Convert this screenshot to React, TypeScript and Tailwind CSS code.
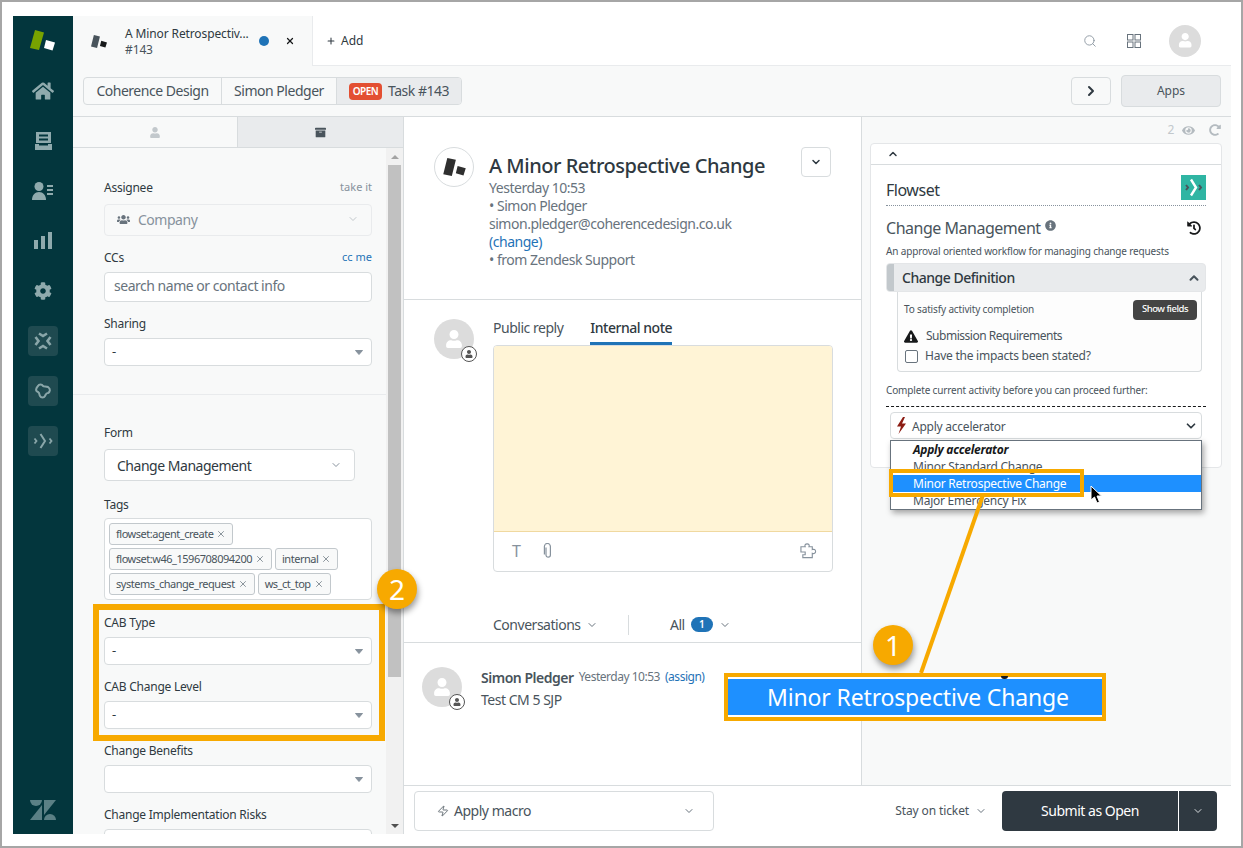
import { ChevronDown, ChevronUp, ChevronRight, Search, Plus, X, Zap } from "lucide-react";
import {
  FaHome,
  FaCog,
  FaUser,
  FaUsers,
  FaArchive,
  FaEye,
  FaRedoAlt,
  FaInfoCircle,
  FaHistory,
  FaExclamationTriangle,
} from "react-icons/fa";

// small triangle used by the native looking selects
function Caret() {
  return (
    <svg width="8" height="5" viewBox="0 0 8 5" className="shrink-0">
      <path d="M0.500 0.500 L7.500 0.500 L4 4.500 Z" fill="#87929d" stroke="#87929d" strokeLinejoin="round" />
    </svg>
  );
}

function Logo({ dark, light, className }: { dark: string; light: string; className?: string }) {
  return (
    <svg viewBox="0 0 25 20" className={className}>
      <polygon points="4.500,0 14,2 9.500,20 0,18" fill={dark} />
      <polygon points="16,9 25,11.500 22.500,19.500 14,17" fill={light} />
    </svg>
  );
}

function Avatar({ size }: { size: string }) {
  return (
    <div className={`${size} rounded-full bg-[#dcdcdc] flex items-center justify-center shrink-0`}>
      <FaUser className="text-white w-[45%] h-[45%]" />
    </div>
  );
}

function AvatarWithBadge() {
  return (
    <div className="relative w-10 h-10 shrink-0">
      <Avatar size="w-10 h-10" />
      <div className="absolute left-[27px] top-[27px] w-4 h-4 rounded-full bg-white border border-[#555] flex items-center justify-center">
        <FaUser className="text-[#555] w-2 h-2" />
      </div>
    </div>
  );
}

function SelectField({ label, value }: { label: string; value: string }) {
  return (
    <div>
      <div className="h-[23px] flex items-center text-[12px] tracking-[-0.02em] text-[#2f3941]">{label}</div>
      <div className="mt-[3px] h-7 pl-[7px] pr-[8px] bg-white border border-[#d8dcde] rounded-[4px] flex items-center justify-between text-[13px] text-[#2f3941]">
        <span>{value}</span>
        <Caret />
      </div>
    </div>
  );
}

function Tag({ text }: { text: string }) {
  return (
    <span className="h-[22px] px-[6px] bg-[#f8f9f9] border border-[#c2c8cc] rounded-[3px] flex items-center gap-[3px] text-[11px] text-[#49545c] whitespace-nowrap">
      {text}
      <X className="w-[10px] h-[10px] text-[#68737d]" strokeWidth={1.800} />
    </span>
  );
}

function NavTile({ children }: { children: React.ReactNode }) {
  return (
    <div className="w-[30px] h-[30px] rounded-[4px] bg-[#1f4a50] flex items-center justify-center">
      <svg viewBox="0 0 20 20" className="w-5 h-5" fill="none" stroke="#8aa6a9" strokeWidth="2">
        {children}
      </svg>
    </div>
  );
}

function Sidebar() {
  return (
    <div className="w-[60px] shrink-0 bg-[#03363d] flex flex-col items-center relative">
      <svg viewBox="0 0 26 22" className="w-[26px] h-[22px] mt-[14px]">
        <polygon points="5,0 14,2.500 9,20 0,18" fill="#78a300" />
        <polygon points="16,10 25,12.500 22.500,20.500 14,18" fill="#ffffff" />
      </svg>
      <FaHome className="w-[22px] h-[20px] mt-[29px] text-[#8faaad]" />
      <svg viewBox="0 0 17 18" className="w-[17px] h-[18px] mt-[31px]" fill="#8faaad">
        <path d="M1 0h15v11H1zM4 2.500V4.500h9V2.500zM4 6.500V8.500h9V6.500z" fillRule="evenodd" />
        <path d="M0 12h4v1.500h9V12h4v6H0z" />
      </svg>
      <svg viewBox="0 0 22 18" className="w-[22px] h-[18px] mt-[32px]" fill="#8faaad">
        <circle cx="7" cy="4.500" r="4.500" />
        <path d="M0 18c0-5 3-8 7-8s7 3 7 8z" />
        <rect x="15" y="3" width="6" height="2" />
        <rect x="15" y="7" width="6" height="2" />
        <rect x="15" y="11" width="6" height="2" />
      </svg>
      <svg viewBox="0 0 18 18" className="w-[18px] h-[18px] mt-[32px]" fill="#8faaad">
        <rect x="0" y="8" width="4" height="9" />
        <rect x="7" y="4" width="4" height="13" />
        <rect x="14" y="0" width="4" height="17" />
      </svg>
      <FaCog className="w-[18px] h-[18px] mt-[32px] text-[#8faaad]" />
      <div className="mt-[26px] flex flex-col gap-5">
        <NavTile>
          <path d="M6 2.500l4 2.500 4-2.500M6 17.500l4-2.500 4 2.500M2.500 6l3 4-3 4M17.500 6l-3 4 3 4" strokeWidth="2.600" />
        </NavTile>
        <NavTile>
          <path d="M5 5c1-2 4-2 5 0 1 1 3 0 5 1 3 2 2 5 0 6-2 0-2 1-3 3-1 2-4 2-5 0-1-1 0-3-2-4-3-1-2-4 0-6z" />
        </NavTile>
        <NavTile>
          <path d="M1.500 7.500l2 2.500-2 2.500M16.500 7.500l2 2.500-2 2.500" strokeWidth="1.800" />
          <path d="M7.500 3l4.500 7-4.500 7" />
        </NavTile>
      </div>
      <svg viewBox="0 0 26 20" className="w-[26px] h-5 absolute left-[17px] top-[784px]" fill="#5b8085">
        <path d="M0 0H12A6 6 0 0 1 0 0Z" />
        <path d="M14 0H26L14 15Z" />
        <path d="M12 5V20H0Z" />
        <path d="M14 20A6 6 0 0 1 26 20Z" />
      </svg>
    </div>
  );
}

function TopBars() {
  return (
    <>
      <div className="h-[50px] flex shrink-0">
        <div className="w-[240px] bg-[#f8f9f9] border-r border-[#e9ebed] flex items-center pl-[18px]">
          <Logo dark="#49545c" light="#17191a" className="w-4 h-[13px]" />
          <div className="ml-[18px] w-[125px] pt-[2px] text-[12px] tracking-[-0.01em] leading-4 text-[#2f3941]">
            <div className="whitespace-nowrap">A Minor Retrospectiv...</div>
            <div className="text-[#49545c]">#143</div>
          </div>
          <span className="ml-[9px] w-[10px] h-[10px] rounded-full bg-[#1f73b7]" />
          <X className="ml-[16px] w-[10px] h-[10px] text-[#17191a]" strokeWidth={3} />
        </div>
        <div className="flex-1 bg-white border-b border-[#e9ebed] flex items-center">
          <Plus className="ml-[13px] w-[10px] h-[10px] text-[#2f3941]" strokeWidth={2.500} />
          <span className="ml-[5px] text-[12px] tracking-normal text-[#2f3941]">Add</span>
          <Search className="ml-auto w-[14px] h-[14px] text-[#87929d]" strokeWidth={1.500} />
          <svg viewBox="0 0 14 14" className="ml-[30px] w-[14px] h-[14px]" fill="none" stroke="#68737d" strokeWidth="1">
            <rect x="0.500" y="0.500" width="5.500" height="5.500" />
            <rect x="8" y="0.500" width="5.500" height="5.500" />
            <rect x="0.500" y="8" width="5.500" height="5.500" />
            <rect x="8" y="8" width="5.500" height="5.500" />
          </svg>
          <div className="ml-[28px] mr-[30px]">
            <Avatar size="w-8 h-8" />
          </div>
        </div>
      </div>
      <div className="h-[51px] shrink-0 bg-[#f8f9f9] border-b border-[#d8dcde] flex items-center pl-[10px] pr-[10px]">
        <div className="h-7 flex border border-[#d8dcde] rounded-[4px] text-[14px] text-[#49545c] overflow-hidden">
          <div className="w-[138px] pb-[2px] flex items-center justify-center border-r border-[#d8dcde]">Coherence Design</div>
          <div className="w-[115px] pb-[2px] flex items-center justify-center border-r border-[#d8dcde]">Simon Pledger</div>
          <div className="w-[124px] bg-[#e9ebed] flex items-center pl-[12px] gap-[6px]">
            <span className="w-[33px] h-[17px] rounded-[4px] bg-[#e34f32] text-white text-[10px] font-semibold flex items-center justify-center">OPEN</span>
            <span className="pb-[2px]">Task #143</span>
          </div>
        </div>
        <div className="ml-auto w-10 h-7 border border-[#d8dcde] rounded-[4px] flex items-center justify-center">
          <ChevronRight className="w-4 h-4 text-[#2f3941]" strokeWidth={3} />
        </div>
        <div className="ml-[10px] w-[100px] h-8 bg-[#e9ebed] border border-[#d8dcde] rounded-[4px] flex items-center justify-center text-[12px] tracking-normal text-[#49545c]">
          Apps
        </div>
      </div>
    </>
  );
}

function LeftPanel() {
  return (
    <div className="w-[331px] shrink-0 bg-[#f8f9f9] border-r border-[#d8dcde] flex flex-col overflow-hidden">
      <div className="h-[31px] shrink-0 flex border-b border-[#d8dcde]">
        <div className="w-[164px] flex items-center justify-center">
          <FaUser className="w-[10px] h-[11px] text-[#c2c8cc]" />
        </div>
        <div className="flex-1 bg-[#e9ebed] border-l border-[#d8dcde] flex items-center justify-center">
          <FaArchive className="w-[11px] h-[11px] text-[#49545c]" />
        </div>
      </div>
      <div className="flex-1 flex min-h-0">
        <div className="w-[313px] shrink-0 overflow-hidden">
          <div className="pl-[31px] pr-[14px] pt-[28px] h-[247px] border-b border-[#e9ebed]">
            <div className="h-[23px] flex items-center justify-between">
              <span className="text-[12px] tracking-[-0.02em] text-[#2f3941]">Assignee</span>
              <span className="text-[11px] tracking-normal text-[#87929d]">take it</span>
            </div>
            <div className="mt-[5px] h-8 px-[12px] pb-[2px] border border-[#e9ebed] rounded-[4px] flex items-center text-[14px] text-[#87929d]">
              <FaUsers className="w-[13px] h-[13px] text-[#68737d]" />
              <span className="ml-[8px]">Company</span>
              <ChevronDown className="ml-auto w-3 h-3 text-[#c2c8cc]" />
            </div>
            <div className="mt-[10px] h-[23px] flex items-center justify-between">
              <span className="text-[12px] tracking-[-0.02em] text-[#2f3941]">CCs</span>
              <span className="text-[11px] tracking-normal text-[#1f73b7]">cc me</span>
            </div>
            <div className="mt-[3px] h-[30px] px-[9px] pb-[3px] bg-white border border-[#d8dcde] rounded-[4px] flex items-center text-[14px] text-[#68737d]">
              search name or contact info
            </div>
            <div className="mt-[10px]">
              <SelectField label="Sharing" value="-" />
            </div>
          </div>
          <div className="pl-[31px] pr-[14px]">
            <div className="mt-[26px] h-[23px] flex items-center text-[12px] tracking-[-0.02em] text-[#2f3941]">Form</div>
            <div className="mt-[5px] w-[251px] h-8 px-[12px] bg-white border border-[#d8dcde] rounded-[4px] flex items-center justify-between text-[14px] text-[#2f3941]">
              Change Management
              <ChevronDown className="w-3 h-3 text-[#87929d]" />
            </div>
            <div className="mt-[12px] h-[23px] flex items-center text-[12px] tracking-[-0.02em] text-[#2f3941]">Tags</div>
            <div className="mt-[2px] h-[82px] px-[4px] pt-[4px] bg-white border border-[#d8dcde] rounded-[4px] flex flex-col gap-[3px]">
              <div className="flex gap-[3px]">
                <Tag text="flowset:agent_create" />
              </div>
              <div className="flex gap-[3px]">
                <Tag text="flowset:w46_1596708094200" />
                <Tag text="internal" />
              </div>
              <div className="flex gap-[3px]">
                <Tag text="systems_change_request" />
                <Tag text="ws_ct_top" />
              </div>
            </div>
            <div className="mt-[11px] flex flex-col gap-[10px]">
              <SelectField label="CAB Type" value="-" />
              <SelectField label="CAB Change Level" value="-" />
              <SelectField label="Change Benefits" value="" />
              <SelectField label="Change Implementation Risks" value="" />
            </div>
          </div>
        </div>
        <div className="w-[17px] shrink-0 bg-[#f1f1f1] flex flex-col items-center pr-[1px] pl-[1px]">
          <div className="h-[17px] flex items-center">
            <div className="w-0 h-0 border-x-[4px] border-x-transparent border-b-[4px] border-b-[#a3a3a3]" />
          </div>
          <div className="w-[13px] h-[512px] bg-[#c1c1c1]" />
          <div className="mt-auto h-[17px] flex items-center">
            <div className="w-0 h-0 border-x-[4px] border-x-transparent border-t-[4px] border-t-[#505050]" />
          </div>
        </div>
      </div>
    </div>
  );
}

function CenterPanel() {
  return (
    <div className="w-[458px] shrink-0 bg-white border-r border-[#d8dcde] flex flex-col">
      <div className="h-[183px] shrink-0 border-b border-[#d8dcde] pl-[30px] pr-[30px] pt-[30px] flex">
        <div className="w-10 h-10 rounded-full border border-[#d8dcde] flex items-center justify-center shrink-0">
          <Logo dark="#2f2f2f" light="#2f2f2f" className="w-[23px] h-[18px]" />
        </div>
        <div className="ml-[15px] flex-1">
          <div className="text-[20px] leading-[24px] mt-[7px] font-medium text-[#2f3941]">A Minor Retrospective Change</div>
          <div className="mt-[1px] text-[14px] leading-[18px] text-[#68737d]">
            <div>Yesterday 10:53</div>
            <div>• Simon Pledger</div>
            <div>simon.pledger@coherencedesign.co.uk</div>
            <div className="text-[#1f73b7]">(change)</div>
            <div>• from Zendesk Support</div>
          </div>
        </div>
        <div className="w-[30px] h-[30px] border border-[#d8dcde] rounded-[4px] flex items-center justify-center shrink-0">
          <ChevronDown className="w-3 h-3 text-[#2f3941]" strokeWidth={3} />
        </div>
      </div>
      <div className="pl-[30px] pt-[19px] flex gap-[19px]">
        <AvatarWithBadge />
        <div className="w-[340px]">
          <div className="h-[26px] flex gap-[27px] text-[14px] leading-[18px] text-[#49545c]">
            <span>Public reply</span>
            <span className="border-b-[3px] border-[#1f73b7] font-medium text-[#2f3941] relative z-10">Internal note</span>
          </div>
          <div className="h-[227px] border border-[#d8dcde] rounded-[4px] overflow-hidden flex flex-col">
            <div className="h-[186px] bg-[#fff4d6] border-b border-[#f0d9a0]" />
            <div className="flex-1 flex items-center pl-[18px] pr-[15px] pb-[2px]">
              <span className="text-[16px] leading-none text-[#87929d]">T</span>
              <svg viewBox="0 0 10 16" className="ml-[23px] w-[10px] h-4" fill="none" stroke="#87929d" strokeWidth="1.200">
                <path d="M3 4.500V12a2.200 2.200 0 0 0 4.400 0V3.500a3 3 0 0 0-6 0V11.500" />
              </svg>
              <svg viewBox="0 0 18 16" className="ml-auto w-[17px] h-[16px]" fill="none" stroke="#87929d" strokeWidth="1.200">
                <path d="M1 3.500h4.500c-.8-1.800.2-3 2-3s2.800 1.200 2 3h3.500v3c1.800-.8 3.500.2 3.500 2s-1.700 2.800-3.500 2v4.500H3v-3h2.500v-3H1z" />
              </svg>
            </div>
          </div>
        </div>
      </div>
      <div className="mt-[38px] h-[33px] shrink-0 border-b border-[#d8dcde] pl-[89px] pt-[5px] flex items-start text-[14px] text-[#49545c]">
        <div className="h-[20px] pb-[1px] flex items-center w-[136px] border-r border-[#d8dcde]">
          Conversations
          <ChevronDown className="ml-[5px] w-3 h-3 text-[#68737d]" />
        </div>
        <div className="h-[20px] pb-[1px] flex items-center ml-[41px]">
          All
          <span className="ml-[6px] w-[22px] h-[15px] rounded-full bg-[#1f73b7] text-white text-[10px] font-semibold flex items-center justify-center">1</span>
          <ChevronDown className="ml-[6px] w-3 h-3 text-[#68737d]" />
        </div>
      </div>
      <div className="pl-[18px] pt-[24px] flex gap-[19px]">
        <AvatarWithBadge />
        <div>
          <div className="h-5 flex items-center gap-[5px] whitespace-nowrap">
            <span className="text-[14px] font-semibold text-[#49545c]">Simon Pledger</span>
            <span className="text-[12px] text-[#68737d]">Yesterday 10:53</span>
            <span className="text-[12px] text-[#1f73b7]">(assign)</span>
          </div>
          <div className="mt-[2px] text-[14px] text-[#49545c]">Test CM 5 SJP</div>
        </div>
      </div>
    </div>
  );
}

function RightPanel() {
  return (
    <div className="flex-1 bg-[#f8f9f9] pl-[8px] pr-[9px] flex flex-col min-w-0">
      <div className="h-[26px] shrink-0 flex items-center justify-end pr-[1px] text-[12px] text-[#c2c8cc]">
        2
        <FaEye className="ml-[8px] w-[13px] h-[13px] text-[#b4bbc0]" />
        <FaRedoAlt className="ml-[14px] w-3 h-3 text-[#b4bbc0]" />
      </div>
      <div className="h-[325px] shrink-0 bg-white border border-[#e4e6e8] rounded-[4px]">
        <div className="h-[21px] border-b border-[#d8dcde] pl-[16px] flex items-center">
          <ChevronUp className="w-3 h-3 text-[#2f3941]" strokeWidth={3} />
        </div>
        <div className="px-[15px] pt-[10px]">
          <div className="h-[31px] border-b border-dotted border-[#87929d] flex items-center justify-between">
            <span className="text-[16px] text-[#2f3941]">Flowset</span>
            <div className="w-[25px] h-[25px] bg-[#2fb5a3] mb-[5px]">
              <svg viewBox="0 0 25 25" className="w-[25px] h-[25px]" fill="none" strokeWidth="2">
                <path d="M5 10l2 2.500-2 2.500M18 10l2 2.500-2 2.500" stroke="#49545c" />
                <path d="M10 4.500l5 8-5 8" stroke="#ffffff" strokeWidth="2.400" />
              </svg>
            </div>
          </div>
          <div className="h-[38px] pt-[6px] flex items-center">
            <span className="text-[16px] text-[#49545c]">Change Management</span>
            <FaInfoCircle className="ml-[4px] mb-[6px] w-[11px] h-[11px] text-[#68737d]" />
            <FaHistory className="ml-auto mr-[5px] w-[14px] h-[14px] text-[#17191a]" />
          </div>
          <div className="text-[10px] tracking-[-0.015em] leading-[14px] text-[#49545c] whitespace-nowrap">An approval oriented workflow for managing change requests</div>
          <div className="mt-[5px] h-[29px] bg-[#e9ebed] border border-[#e4e6e8] rounded-[4px] overflow-hidden flex items-center">
            <div className="w-[7px] h-full bg-[#c2c8cc]" />
            <span className="ml-[8px] text-[14px] font-medium text-[#2f3941]">Change Definition</span>
            <ChevronUp className="ml-auto mr-[4px] w-[14px] h-[14px] text-[#49545c]" strokeWidth={3.500} />
          </div>
          <div className="ml-[11px] mr-[4px] h-[80px] bg-[#fdfdfd] border border-t-0 border-[#d8dcde] rounded-b-[4px] pl-[6px] pr-[4px]">
            <div className="h-[28px] pt-[7px] flex items-center justify-between">
              <span className="text-[10px] tracking-[-0.015em] text-[#49545c]">To satisfy activity completion</span>
              <span className="w-[64px] h-5 bg-[#444444] rounded-[4px] text-white text-[9.500px] font-medium flex items-center justify-center">Show fields</span>
            </div>
            <div className="mt-[6px] h-[20px] flex items-center text-[12px] text-[#49545c]">
              <FaExclamationTriangle className="w-[14px] h-[13px] text-[#17191a]" />
              <span className="ml-[8px]">Submission Requirements</span>
            </div>
            <div className="h-5 flex items-center text-[12px] tracking-[-0.02em] text-[#49545c]">
              <span className="w-[13px] h-[13px] ml-[1px] bg-white border border-[#68737d] rounded-[2px]" />
              <span className="ml-[7px]">Have the impacts been stated?</span>
            </div>
          </div>
          <div className="mt-[11px] text-[10px] tracking-[-0.015em] leading-[14px] text-[#49545c] whitespace-nowrap">Complete current activity before you can proceed further:</div>
          <div className="mt-[9px] border-b border-dashed border-[#17191a]" />
          <div className="mt-[5px] ml-[4px] mr-[4px] h-[27px] bg-white border border-[#d8dcde] rounded-[4px] pl-[5px] pr-[3px] flex items-center text-[12px] tracking-[-0.02em] text-[#49545c]">
            <svg viewBox="0 0 11 17" className="w-[11px] h-[17px] shrink-0">
              <polygon points="7,0 1,9.500 5,9.500 2.500,17 10,6.500 6,6.500 9,0" fill="#8c1c13" />
            </svg>
            <span className="ml-[5px] pt-[2px]">Apply accelerator</span>
            <ChevronDown className="ml-auto w-[14px] h-[14px] text-[#2f3941]" strokeWidth={3} />
          </div>
        </div>
      </div>
    </div>
  );
}

function BottomBar() {
  return (
    <div className="h-[49px] shrink-0 bg-white border-t border-[#d8dcde] flex items-center pt-[2px] pl-[10px] pr-[14px]">
      <div className="w-[300px] h-10 pb-[1px] border border-[#d8dcde] rounded-[4px] flex items-center pl-[22px] pr-[18px] text-[14px] text-[#49545c]">
        <Zap className="w-3 h-3 text-[#49545c]" strokeWidth={1.600} />
        <span className="ml-[5px]">Apply macro</span>
        <ChevronDown className="ml-auto w-3 h-3 text-[#68737d]" />
      </div>
      <span className="ml-auto text-[12px] tracking-[-0.01em] text-[#49545c]">Stay on ticket</span>
      <ChevronDown className="ml-[6px] w-3 h-3 text-[#68737d]" />
      <div className="ml-[15px] h-10 flex rounded-[4px] overflow-hidden text-white">
        <div className="w-[176px] pb-[2px] bg-[#2f3941] flex items-center justify-center text-[14px]">Submit as Open</div>
        <div className="w-[38px] ml-px bg-[#2f3941] flex items-center justify-center">
          <ChevronDown className="w-3 h-3 text-[#d8dcde]" />
        </div>
      </div>
    </div>
  );
}

// everything that was drawn over the screenshot: native dropdown, cursor, call-outs
function Overlays() {
  return (
    <>
      <div className="absolute left-[888px] top-[438px] w-[312px] h-[70px] bg-white border border-[#68737d] shadow-[2px_3px_6px_rgba(0,0,0,0.35)] text-[12px] tracking-[-0.02em] leading-[17px] text-[#49545c]">
        <div className="pl-[22px] font-bold italic text-[#17191a]">Apply accelerator</div>
        <div className="pl-[22px]">Minor Standard Change</div>
        <div className="pl-[22px] bg-[#1e90ff] text-white">Minor Retrospective Change</div>
        <div className="pl-[22px]">Major Emergency Fix</div>
      </div>
      <svg viewBox="0 0 14 20" className="absolute left-[1087px] top-[483px] w-[14px] h-5">
        <path d="M2 1v14l3.500-3 2.500 6 2.500-1-2.500-6h4.500z" fill="#000" stroke="#fff" strokeWidth="1" />
      </svg>
      <div className="absolute left-[887px] top-[467px] w-[195px] h-[28px] border-[4px] border-[#f7a900]" />
      <svg className="absolute left-0 top-0 w-[1239px] h-[844px] pointer-events-none" viewBox="0 0 1239 844">
        <line x1="981" y1="493" x2="919" y2="671" stroke="#f7a900" strokeWidth="4" />
      </svg>
      <div className="absolute left-[722px] top-[671px] w-[382px] h-[48px] border-[4px] border-[#f7a900] bg-white flex items-center">
        <div className="w-full h-[36px] pl-[6px] bg-[#1e90ff] text-white text-[23px] tracking-[-0.007em] flex items-center justify-center">Minor Retrospective Change</div>
        <div className="absolute left-[273px] top-[-1px] w-[7px] h-[3px] rounded-b-full bg-[#17191a]" />
      </div>
      <div className="absolute left-[871px] top-[623px] w-10 h-10 rounded-full bg-[#f7a900] text-white text-[28px] tracking-normal flex items-center justify-center shadow-[1px_4px_6px_rgba(0,0,0,0.4)]">1</div>
      <div className="absolute left-[91px] top-[602px] w-[292px] h-[137px] border-[6px] border-[#f7a900]" />
      <div className="absolute left-[375px] top-[567px] w-10 h-10 rounded-full bg-[#f7a900] text-white text-[28px] tracking-normal flex items-center justify-center shadow-[1px_4px_6px_rgba(0,0,0,0.4)]">2</div>
    </>
  );
}

export default function App() {
  return (
    <div className="relative w-[1243px] h-[848px] overflow-hidden box-border border-2 border-[#a6a6a6] bg-white pt-[14px] pl-[11px] pr-[10px] pb-[12px] tracking-[-0.03em] font-['Noto_Sans',sans-serif]">
      <div className="flex h-full">
        <Sidebar />
        <div className="flex-1 flex flex-col min-w-0">
          <TopBars />
          <div className="flex-1 flex min-h-0">
            <LeftPanel />
            <div className="flex-1 flex flex-col min-w-0">
              <div className="flex-1 flex min-h-0">
                <CenterPanel />
                <RightPanel />
              </div>
              <BottomBar />
            </div>
          </div>
        </div>
      </div>
      <Overlays />
    </div>
  );
}
